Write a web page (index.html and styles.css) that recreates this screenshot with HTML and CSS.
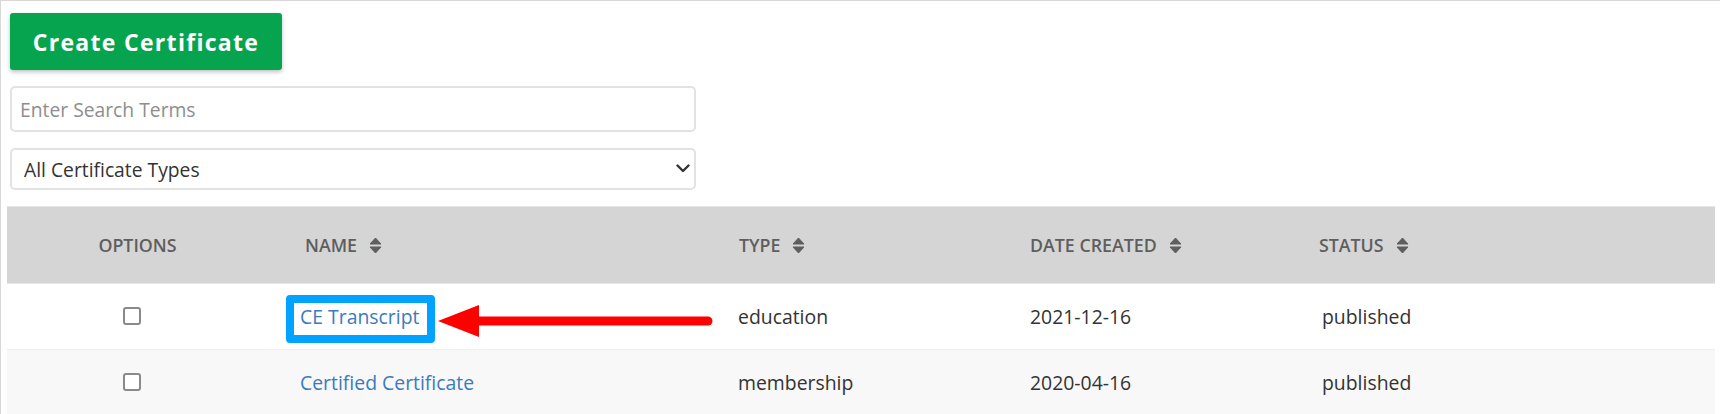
FILE: index.html
```html
<!DOCTYPE html>
<html lang="en">
<head>
<meta charset="utf-8">
<title>Certificates</title>
<link rel="stylesheet" href="styles.css">
</head>
<body>
<div class="page">
  <div class="controls">
    <button class="btn-create" type="button">Create Certificate</button>
    <input class="search" type="text" placeholder="Enter Search Terms">
    <div class="select-wrap">
      <select class="type-select">
        <option>All Certificate Types</option>
      </select>
      <svg class="chevron" width="14" height="9" viewBox="0 0 14 9"><path d="M1.5 1.5 L7 7 L12.5 1.5" fill="none" stroke="#333" stroke-width="2.4" stroke-linecap="round" stroke-linejoin="round"/></svg>
    </div>
  </div>

  <div class="table">
    <div class="row head">
      <div class="cell center">OPTIONS</div>
      <div class="cell name-h">NAME <svg class="sort" width="13" height="17" viewBox="0 0 13 17"><path d="M6.5 1 L12 7 L1 7 Z M1 10 L12 10 L6.5 16 Z" fill="#5e5e5e" stroke="#5e5e5e" stroke-width="1" stroke-linejoin="round"/></svg></div>
      <div class="cell">TYPE <svg class="sort" width="13" height="17" viewBox="0 0 13 17"><path d="M6.5 1 L12 7 L1 7 Z M1 10 L12 10 L6.5 16 Z" fill="#5e5e5e" stroke="#5e5e5e" stroke-width="1" stroke-linejoin="round"/></svg></div>
      <div class="cell">DATE CREATED <svg class="sort" width="13" height="17" viewBox="0 0 13 17"><path d="M6.5 1 L12 7 L1 7 Z M1 10 L12 10 L6.5 16 Z" fill="#5e5e5e" stroke="#5e5e5e" stroke-width="1" stroke-linejoin="round"/></svg></div>
      <div class="cell">STATUS <svg class="sort" width="13" height="17" viewBox="0 0 13 17"><path d="M6.5 1 L12 7 L1 7 Z M1 10 L12 10 L6.5 16 Z" fill="#5e5e5e" stroke="#5e5e5e" stroke-width="1" stroke-linejoin="round"/></svg></div>
    </div>
    <div class="row">
      <div class="cell center"><span class="checkbox"></span></div>
      <div class="cell"><span class="annot"><a href="#" class="link">CE Transcript</a><svg class="arrow" width="276" height="34" viewBox="0 0 276 34"><path d="M0 17 L41 1 L41 33 Z" fill="#ff0000"/><line x1="38" y1="17" x2="270" y2="17" stroke="#ff0000" stroke-width="9" stroke-linecap="round"/></svg></span></div>
      <div class="cell">education</div>
      <div class="cell">2021-12-16</div>
      <div class="cell status">published</div>
    </div>
    <div class="row alt">
      <div class="cell center"><span class="checkbox"></span></div>
      <div class="cell"><a href="#" class="link">Certified Certificate</a></div>
      <div class="cell">membership</div>
      <div class="cell">2020-04-16</div>
      <div class="cell status">published</div>
    </div>
  </div>
</div>
</body>
</html>
```

FILE: styles.css
```css
* { box-sizing: border-box; }

html, body {
  margin: 0;
  padding: 0;
  background: #fff;
  font-family: "Open Sans", "Noto Sans", sans-serif;
  color: #333;
  overflow: hidden;
}

.page {
  border-top: 1px solid #d8d8d8;
  border-left: 1px solid #d8d8d8;
  min-height: 414px;
  padding: 12px 4px 0 6px;
}

.controls {
  display: flex;
  flex-direction: column;
  align-items: flex-start;
  gap: 16px;
  padding-left: 3px;
  margin-bottom: 16px;
}

.btn-create {
  width: 272px;
  height: 57px;
  background: #06a44f;
  color: #fff;
  border: none;
  border-radius: 3px;
  font-family: "Open Sans", sans-serif;
  font-weight: 700;
  font-size: 23px;
  letter-spacing: 1.3px;
  box-shadow: 0 2px 4px rgba(0, 0, 0, 0.25);
  padding: 0;
}

.search {
  width: 686px;
  height: 46px;
  border: 2px solid #e2e2e2;
  border-radius: 5px;
  padding: 0 8px;
  font-family: "Open Sans", sans-serif;
  font-size: 19.3px;
  color: #333;
  outline: none;
}
.search::placeholder { color: #8e8e8e; }

.select-wrap {
  position: relative;
  width: 686px;
}

.type-select {
  appearance: none;
  -webkit-appearance: none;
  width: 686px;
  height: 42px;
  border: 2px solid #e2e2e2;
  border-radius: 5px;
  background: #fff;
  padding: 0 12px;
  font-family: "Open Sans", sans-serif;
  font-size: 19.3px;
  color: #333;
}

.chevron {
  position: absolute;
  right: 6px;
  top: 16px;
}

.table {
  width: 1708px;
}

.row {
  display: grid;
  grid-template-columns: 261px 470px 292px 289px 1fr;
  height: 66px;
  align-items: center;
  border-bottom: 1px solid #eeeeee;
  font-size: 19.4px;
  color: #333;
}

.row.head {
  height: 78px;
  background: #d5d5d5;
  border-top: 1px solid #e6e6e6;
  border-bottom: 1px solid #e8e8e8;
  font-size: 17.8px;
  font-weight: 600;
  color: #5e5e5e;
}

.row.alt { background: #f8f8f8; }

.cell {
  display: flex;
  align-items: center;
  white-space: nowrap;
}

.row:not(.head) .cell:nth-child(2) { padding-left: 32px; }
.row .cell:nth-child(3) { padding-left: 0; }
.row.head .cell:nth-child(2) { padding-left: 37px; }
.row.head .cell:nth-child(3) { padding-left: 1px; }
.row.head .cell:nth-child(5) { padding-left: 0; }
.row .status { padding-left: 3px; }

.cell.center { justify-content: center; }

.sort { margin-left: 12px; }

.checkbox {
  display: inline-block;
  width: 18px;
  height: 18px;
  border: 2px solid #8a8a8a;
  border-radius: 3px;
  background: #fff;
  margin-top: -2px;
  margin-right: 12px;
}

.link {
  color: #3a7bbf;
  text-decoration: none;
}

.annot {
  position: relative;
  display: inline-block;
}
.annot::before {
  content: "";
  position: absolute;
  left: -14px;
  right: -16px;
  top: -8px;
  bottom: -13px;
  border: 8px solid #00a3ff;
  border-radius: 4px;
}

.arrow {
  position: absolute;
  left: calc(100% + 19px);
  top: 1px;
}
```
